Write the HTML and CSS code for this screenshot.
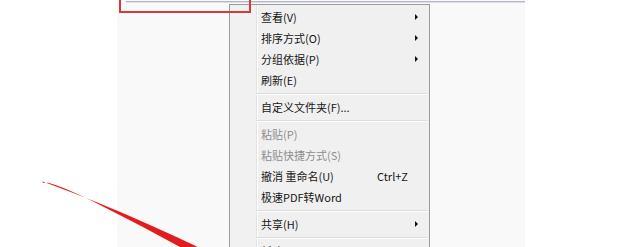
FILE: index.html
```html
<!DOCTYPE html>
<html lang="zh-CN">
<head>
<meta charset="utf-8">
<title>右键菜单</title>
<link rel="stylesheet" href="styles.css">
</head>
<body>
<div class="panel">
  <div class="topline"></div>
  <div class="menu">
    <div class="item"><span class="label">查看(V)</span><span class="sub"><i class="tri"></i></span></div>
    <div class="item"><span class="label">排序方式(O)</span><span class="sub"><i class="tri"></i></span></div>
    <div class="item"><span class="label">分组依据(P)</span><span class="sub"><i class="tri"></i></span></div>
    <div class="item"><span class="label">刷新(E)</span><span class="sub"></span></div>
    <div class="sep"></div>
    <div class="item"><span class="label">自定义文件夹(F)...</span><span class="sub"></span></div>
    <div class="sep"></div>
    <div class="item disabled"><span class="label">粘贴(P)</span><span class="sub"></span></div>
    <div class="item disabled"><span class="label">粘贴快捷方式(S)</span><span class="sub"></span></div>
    <div class="item"><span class="label">撤消 重命名(U)</span><span class="key">Ctrl+Z</span><span class="sub"></span></div>
    <div class="item"><span class="label">极速PDF转Word</span><span class="sub"></span></div>
    <div class="sep"></div>
    <div class="item"><span class="label">共享(H)</span><span class="sub"><i class="tri"></i></span></div>
    <div class="sep"></div>
    <div class="item"><span class="label">新建(W)</span><span class="sub"><i class="tri"></i></span></div>
  </div>
</div>
<div class="redbox"></div>
<svg class="arrow" width="620" height="247" viewBox="0 0 620 247" aria-hidden="true">
  <path d="M42 181.3 Q100 202.5 150 225 T198 247.5 L198 257 Q150 230 100 205 T43.2 182.9 Z" fill="#e31d1d"/>
</svg>
</body>
</html>
```

FILE: styles.css
```css
html, body {
  margin: 0;
  padding: 0;
}
body {
  width: 620px;
  height: 247px;
  overflow: hidden;
  background: #ffffff;
  position: relative;
  font-family: "Noto Sans CJK SC", "Noto Sans", sans-serif;
}
.panel {
  margin-left: 117px;
  width: 408px;
  height: 247px;
  background: #f9f9f9;
  position: relative;
  overflow: hidden;
}
.topline {
  margin-left: 9px;
  margin-top: 1px;
  height: 1px;
  background: #b4b8c6;
  border-bottom: 1px solid #dcdfe7;
}
.menu {
  position: absolute;
  left: 112px;
  top: 4px;
  width: 201px;
  height: 260px;
  box-sizing: border-box;
  border: 1px solid #9c9c9c;
  padding: 2px 0 0 0;
  background: linear-gradient(to right, #f1f1f1 0, #f1f1f1 26px, #e2e3e3 26px, #e2e3e3 27px, #ffffff 27px, #ffffff 28px, #f0f0f0 28px);
  color: #161616;
  font-size: 11px;
}
.item {
  display: flex;
  align-items: center;
  height: 20.8px;
  padding-left: 31px;
  padding-right: 9px;
  white-space: nowrap;
}
.item.disabled {
  color: #8e8e8e;
}
.label {
  flex: 1;
}
.key {
  margin-right: 2px;
}
.sub {
  width: 10px;
  height: 20px;
  display: flex;
  align-items: center;
  justify-content: flex-end;
}
.tri {
  width: 0;
  height: 0;
  border-left: 3.5px solid #111;
  border-top: 3.5px solid transparent;
  border-bottom: 3.5px solid transparent;
  margin-right: 2px;
}
.sep {
  margin: 2.5px 2px 2px 26px;
  border-top: 1px solid #dcdcdc;
  border-bottom: 1px solid #ffffff;
}
.redbox {
  position: absolute;
  left: 119px;
  top: -20px;
  width: 132px;
  height: 33px;
  box-sizing: border-box;
  border: 2px solid #d33b3b;
}
.arrow {
  position: absolute;
  left: 0;
  top: 0;
}
```
